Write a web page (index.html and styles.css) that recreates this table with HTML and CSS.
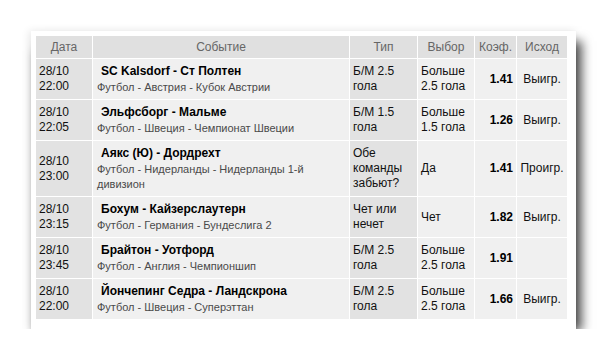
FILE: index.html
```html
<!DOCTYPE html>
<html lang="ru">
<head>
<meta charset="utf-8">
<title>Ставки</title>
<link rel="stylesheet" href="styles.css">
</head>
<body>
<div class="page">
  <div class="card">
    <table class="bets">
      <colgroup>
        <col class="c-date"><col class="c-event"><col class="c-type"><col class="c-choice"><col class="c-odds"><col class="c-res">
      </colgroup>
      <thead>
        <tr><th>Дата</th><th>Событие</th><th>Тип</th><th>Выбор</th><th>Коэф.</th><th>Исход</th></tr>
      </thead>
      <tbody>
        <tr>
          <td class="date">28/10<br>22:00</td>
          <td class="event"><div class="title">SC Kalsdorf - Ст Полтен</div><div class="sub">Футбол - Австрия - Кубок Австрии</div></td>
          <td class="type">Б/М 2.5 гола</td>
          <td class="choice">Больше 2.5 гола</td>
          <td class="odds">1.41</td>
          <td class="res">Выигр.</td>
        </tr>
        <tr>
          <td class="date">28/10<br>22:05</td>
          <td class="event"><div class="title">Эльфсборг - Мальме</div><div class="sub">Футбол - Швеция - Чемпионат Швеции</div></td>
          <td class="type">Б/М 1.5 гола</td>
          <td class="choice">Больше 1.5 гола</td>
          <td class="odds">1.26</td>
          <td class="res">Выигр.</td>
        </tr>
        <tr>
          <td class="date">28/10<br>23:00</td>
          <td class="event"><div class="title">Аякс (Ю) - Дордрехт</div><div class="sub">Футбол - Нидерланды - Нидерланды 1-й дивизион</div></td>
          <td class="type">Обе команды забьют?</td>
          <td class="choice">Да</td>
          <td class="odds">1.41</td>
          <td class="res">Проигр.</td>
        </tr>
        <tr>
          <td class="date">28/10<br>23:15</td>
          <td class="event"><div class="title">Бохум - Кайзерслаутерн</div><div class="sub">Футбол - Германия - Бундеслига 2</div></td>
          <td class="type">Чет или нечет</td>
          <td class="choice">Чет</td>
          <td class="odds">1.82</td>
          <td class="res">Выигр.</td>
        </tr>
        <tr>
          <td class="date">28/10<br>23:45</td>
          <td class="event"><div class="title">Брайтон - Уотфорд</div><div class="sub">Футбол - Англия - Чемпионшип</div></td>
          <td class="type">Б/М 2.5 гола</td>
          <td class="choice">Больше 2.5 гола</td>
          <td class="odds">1.91</td>
          <td class="res"></td>
        </tr>
        <tr>
          <td class="date">28/10<br>22:00</td>
          <td class="event"><div class="title">Йончепинг Седра - Ландскрона</div><div class="sub">Футбол - Швеция - Суперэттан</div></td>
          <td class="type">Б/М 2.5 гола</td>
          <td class="choice">Больше 2.5 гола</td>
          <td class="odds">1.66</td>
          <td class="res">Выигр.</td>
        </tr>
      </tbody>
    </table>
  </div>
</div>
</body>
</html>
```
FILE: styles.css
```css
html, body {
  margin: 0;
  padding: 0;
  background: #ffffff;
}
body {
  font-family: "Liberation Sans", Arial, sans-serif;
  font-size: 12px;
  color: #111;
}
.page {
  padding: 31px 0 0 31px;
}
.card {
  width: 537px;
  height: 290px;
  padding: 4px;
  background: #fff;
  box-shadow:
    -2px 0 8px rgba(0,0,0,0.10),
    0 14px 10px -6px rgba(0,0,0,0.88),
    10px 6px 10px -4px rgba(0,0,0,0.65);
}
.bets {
  border-collapse: separate;
  border-spacing: 1px;
  table-layout: fixed;
  width: 533px;
}
.c-date { width: 56px; }
.c-event { width: 256px; }
.c-type { width: 67px; }
.c-choice { width: 56px; }
.c-odds { width: 41px; }
.c-res { width: 50px; }

th {
  height: 22px;
  padding: 0;
  background: #e0e0e0;
  color: #666;
  font-weight: normal;
  font-size: 12px;
  text-align: center;
  vertical-align: middle;
}
td {
  background: #f0f0f0;
  line-height: 15px;
  padding: 5px 3px;
  vertical-align: middle;
}
td.date, td.type {
  background: #e2e2e2;
}
td.event {
  padding: 3px 3px 4px 4px;
}
.title {
  font-weight: bold;
  line-height: 17px;
  padding-left: 4px;
  color: #000;
}
.sub {
  font-size: 11px;
  color: #4a4a4a;
  line-height: 15px;
}
td.odds {
  text-align: right;
  font-weight: bold;
  color: #000;
}
td.res {
  text-align: center;
  padding: 5px 0;
}
```
